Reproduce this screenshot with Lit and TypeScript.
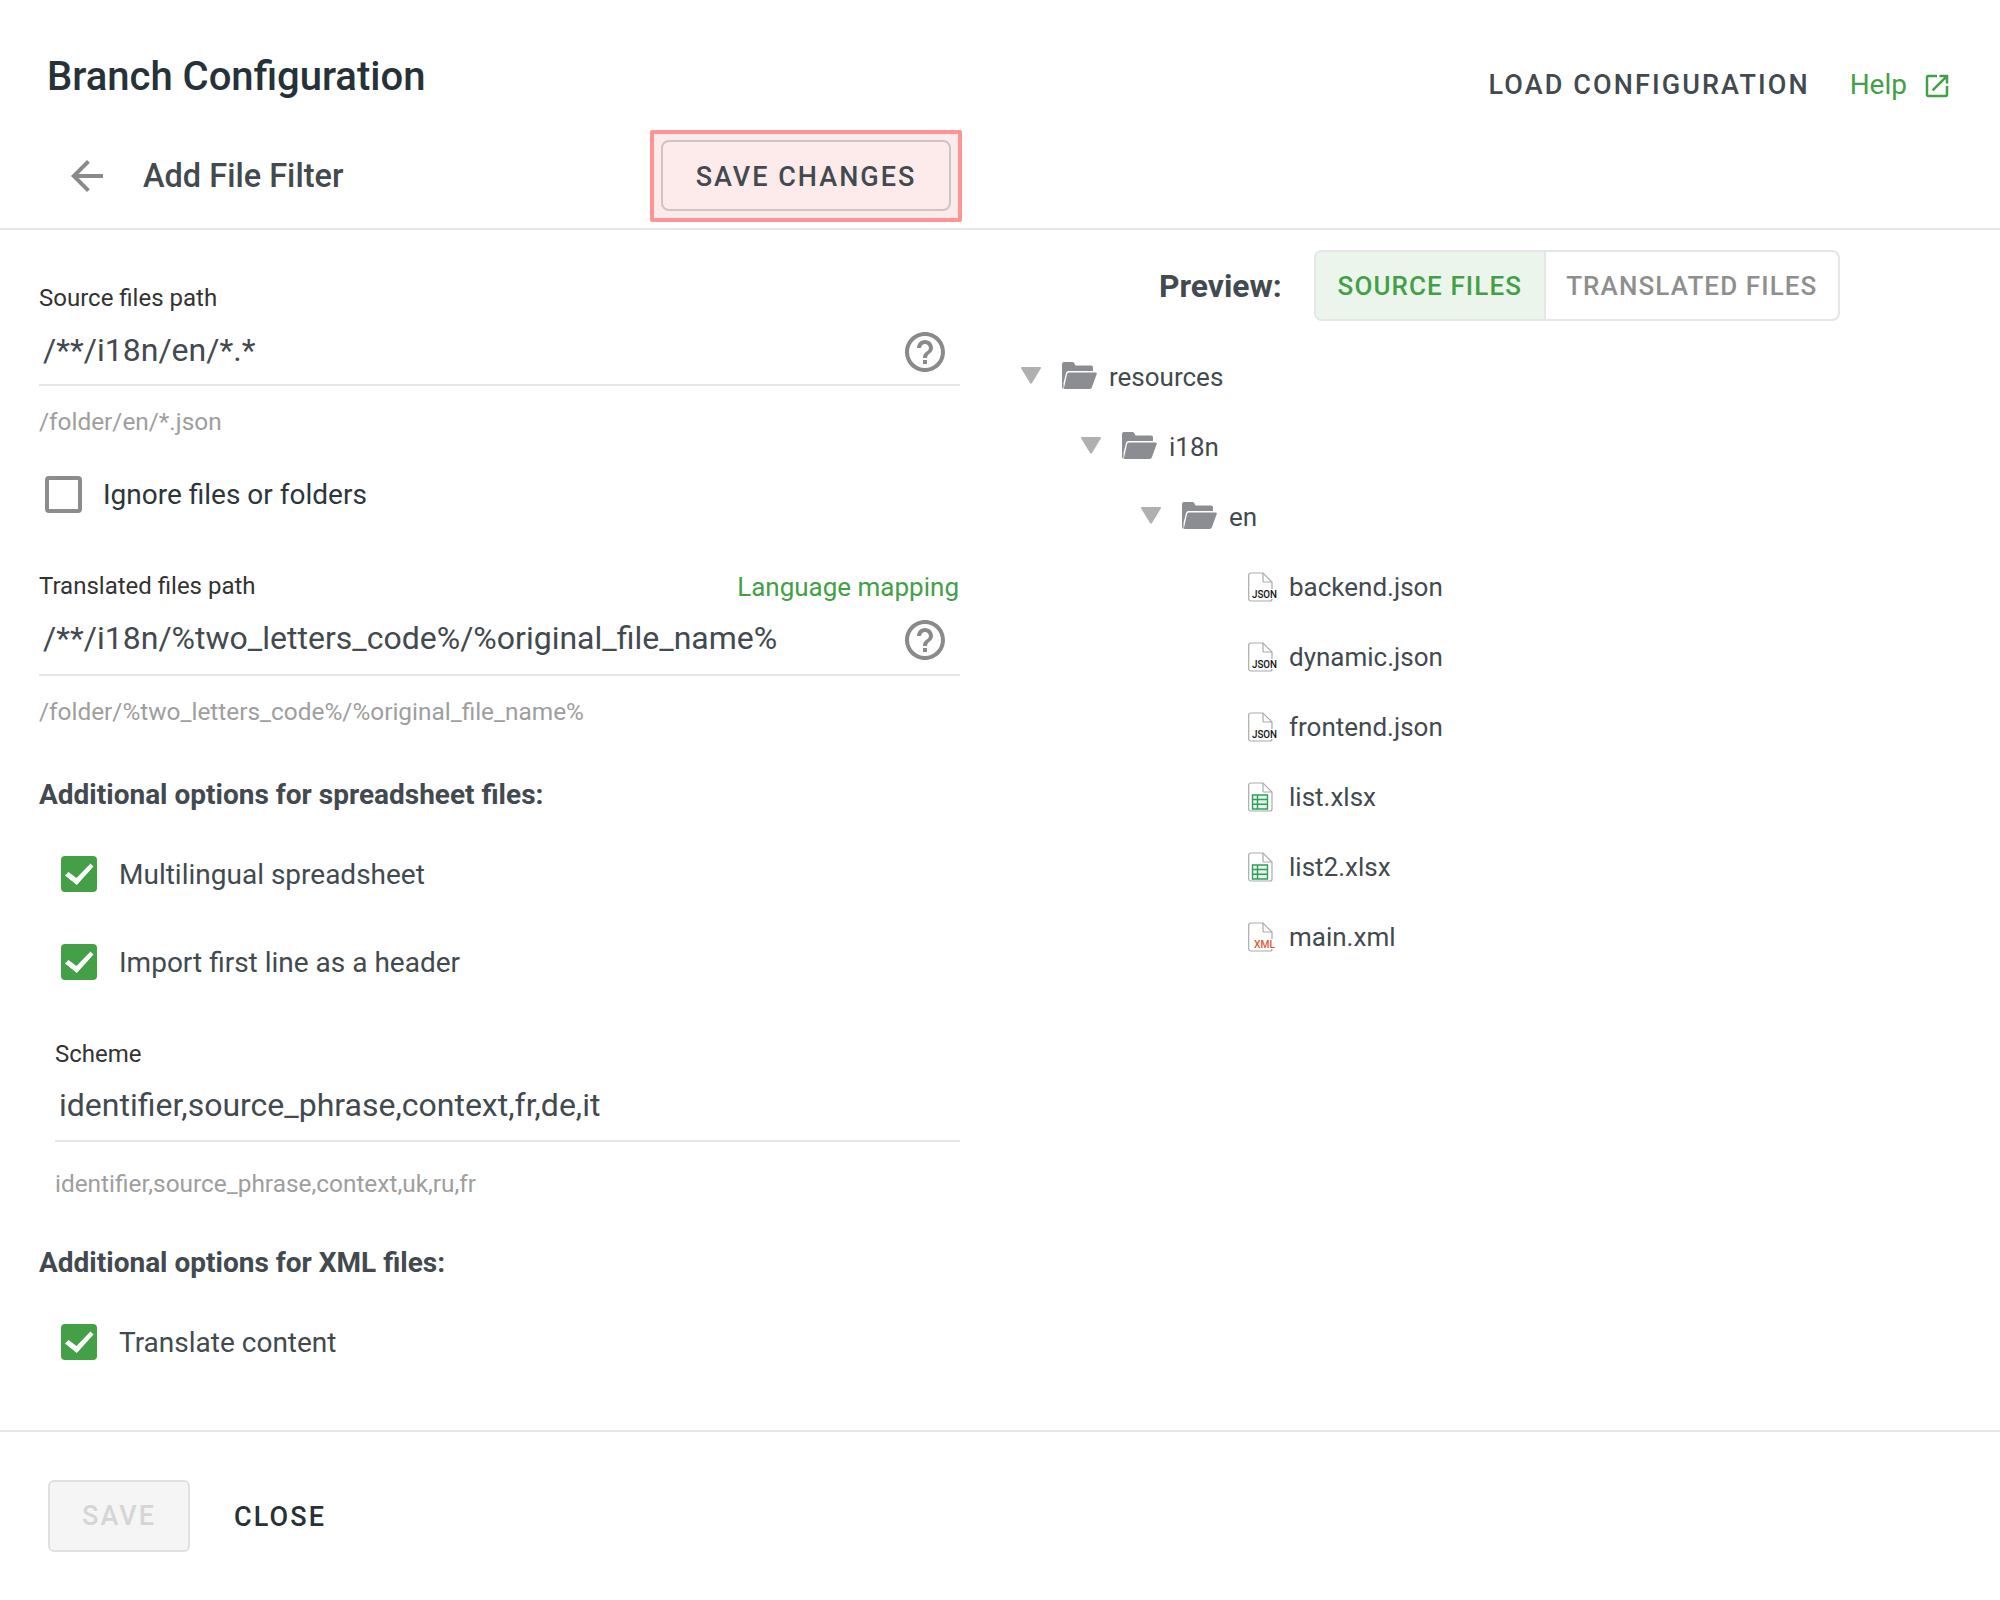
import { LitElement, html, css, svg } from "lit";
import { customElement } from "lit/decorators.js";

const HELP = "M11 18h2v-2h-2v2zm1-16C6.48 2 2 6.48 2 12s4.48 10 10 10 10-4.48 10-10S17.52 2 12 2zm0 18c-4.41 0-8-3.59-8-8s3.59-8 8-8 8 3.59 8 8-3.59 8-8 8zm0-14c-2.21 0-4 1.79-4 4h2c0-1.1.9-2 2-2s2 .9 2 2c0 2-3 1.75-3 5h2c0-2.25 3-2.5 3-5 0-2.21-1.79-4-4-4z";

const helpIcon = html`<svg class="help-icon" viewBox="0 0 24 24"><path d=${HELP}></path></svg>`;

const check = (on: boolean) => on
  ? html`<svg class="cb" viewBox="0 0 36 36"><rect width="36" height="36" rx="4" fill="#43a047"></rect><path d="M4 19.500l3.500-3.500 8 6L29.500 7.500l3 3L15.800 29z" fill="#fff"></path></svg>`
  : html`<span class="cb-off"></span>`;

const folder = html`<svg class="folder" viewBox="0 0 35 27"><path d="M0 2a2 2 0 0 1 2-2h8.500a2 2 0 0 1 1.700 1l1.300 2.500H29a2 2 0 0 1 2 2V9H6.500a2.500 2.500 0 0 0-2.400 1.800L1.500 21V26.800A2 2 0 0 1 0 25z" fill="#8b8d92"></path><path d="M7 10.500H33.500a1.200 1.200 0 0 1 1.200 1.500L30 25a2.500 2.500 0 0 1-2.400 2H3a1 1 0 0 1-1-1.200L5 12.300a2 2 0 0 1 2-1.800z" fill="#8b8d92"></path></svg>`;

const page = (inner: unknown) => html`<svg class="file" viewBox="0 0 30 30">
  <path d="M.7 3a2 2 0 0 1 2-2H15l9 9v17a2 2 0 0 1-2 2H2.700a2 2 0 0 1-2-2z" fill="#fff" stroke="#aaa" stroke-width="1.200"></path>
  <path d="M15 1v8a1 1 0 0 0 1 1H24" fill="none" stroke="#aaa" stroke-width="1.200"></path>${inner}</svg>`;

const jsonIcon = page(svg`<rect x="3" y="17" width="27" height="10" fill="#fff"></rect><text x="4" y="26" font-family="Roboto" font-weight="500" font-size="10.500" textLength="25" lengthAdjust="spacingAndGlyphs" fill="#111">JSON</text>`);
const xlsxIcon = page(svg`<path d="M4.500 13h15v14h-15zM4.500 17.500h15M4.500 22.300h15M9.500 13v14" fill="#e6f4ea" stroke="#2e9e5b" stroke-width="1.400"></path>`);
const xmlIcon = page(svg`<rect x="5" y="17" width="25" height="10" fill="#fff"></rect><text x="6" y="26" font-family="Roboto" font-weight="500" font-size="10" textLength="21" lengthAdjust="spacingAndGlyphs" fill="#e4572e">XML</text>`);

const FOLDERS = ["resources", "i18n", "en"];
const FILES: [string, unknown][] = [
  ["backend.json", jsonIcon],
  ["dynamic.json", jsonIcon],
  ["frontend.json", jsonIcon],
  ["list.xlsx", xlsxIcon],
  ["list2.xlsx", xlsxIcon],
  ["main.xml", xmlIcon],
];

@customElement("app-root")
export class AppRoot extends LitElement {
  static styles = css`
    :host { display: block; width: 2000px; height: 1600px; background: #fff; font-family: Roboto, "Liberation Sans", sans-serif; color: #424a4f; position: relative; overflow: hidden; }
    * { box-sizing: border-box; }
    .top { height: 230px; border-bottom: 2px solid #e6e6e6; }
    .title-row { height: 130px; display: flex; justify-content: space-between; padding: 55px 48px 0 47px; }
    h1 { margin: 0; font-size: 40px; line-height: 44px; font-weight: 500; color: #263238; }
    .top-actions { display: flex; align-items: center; height: 60px; }
    .load { font-size: 27px; font-weight: 500; letter-spacing: 2.100px; color: #424a4f; margin-right: 40px; }
    .help-link { font-size: 28px; color: #43a047; margin: -1px 15px 0 0; }
    .ext { width: 30px; height: 30px; fill: #43a047; margin-top: 2px; }
    .sub-row { height: 98px; display: flex; padding-left: 63px; margin-top: -1px; position: relative; }
    .back { width: 48px; height: 48px; fill: #8a8a8a; margin-top: 23px; }
    h2 { margin: 25px 0 0 32px; font-size: 32.500px; line-height: 44px; font-weight: 500; color: #424a4f; width: 507px; }
    .highlight { width: 312px; height: 92px; margin-top: 1px; border: 4px solid #ff9494; background: #fdeaea; border-radius: 2px; padding: 6px 7px; }
    .highlight button { width: 100%; height: 71px; border: 2px solid #cfc4c5; border-radius: 8px; background: transparent; font: 500 27px Roboto, sans-serif; letter-spacing: 2px; color: #424a4f; padding: 2px 0 0; }
    .body { display: flex; height: 1200px; }
    .left { width: 960px; padding: 50px 0 0 39px; flex: none; }
    .label { font-size: 24px; line-height: 36px; color: #333; }
    .input { height: 70px; border-bottom: 2px solid #e6e6e6; display: flex; align-items: center; justify-content: space-between; padding: 0 11px 0 4px; font-size: 32px; color: #424a4f; }
    .input.tall { height: 72px; padding-bottom: 2px; }
    .help-icon { width: 48px; height: 48px; fill: #8a8a8a; flex: none; margin-top: 4px; }
    .hint { font-size: 24.400px; line-height: 30px; margin-top: 21px; color: #9e9e9e; }
    .ignore { display: flex; align-items: center; height: 40px; margin: 37px 0 0 6px; font-size: 28px; color: #2c363b; }
    .cb-off { width: 37px; height: 37px; border: 4px solid #8c8c8c; border-radius: 4px; margin-right: 21px; flex: none; }
    .label-row { display: flex; justify-content: space-between; align-items: center; margin-top: 54px; }
    .lang { font-size: 26px; color: #43a047; margin: 2px 1px 0 0; }
    .section { font-size: 28px; font-weight: 700; line-height: 36px; color: #424a4f; margin-top: 50px; }
    .section.xml { margin-top: 46px; }
    .opt { display: flex; align-items: center; height: 36px; margin: 43px 0 0 22px; font-size: 28px; }
    .opt + .opt { margin-top: 52px; }
    .section.xml + .opt { margin-top: 43px; }
    .cb { width: 36px; height: 36px; margin-right: 22px; flex: none; }
    .scheme { margin: 56px 0 0 16px; }
    .scheme .input { padding-bottom: 2px; }
    .scheme .hint { margin-top: 27px; }
    .right { flex: 1; padding: 20px 0 0 61px; }
    .preview { display: flex; align-items: center; height: 71px; padding-left: 138px; }
    .preview b { font-size: 31.800px; font-weight: 700; margin-right: 32px; color: #424a4f; }
    .seg { display: flex; width: 526px; height: 71px; border: 2px solid #e6e6e6; border-radius: 8px; overflow: hidden; font-size: 26px; font-weight: 500; letter-spacing: 1.100px; }
    .seg div { display: flex; align-items: center; justify-content: center; }
    .seg .on { width: 230px; background: #ebf5ec; color: #43a047; border-right: 2px solid #e6e6e6; }
    .seg .off { flex: 1; color: #8f8f8f; }
    .tree { margin-top: 21px; }
    .row { height: 70px; display: flex; align-items: center; font-size: 26px; color: #424a4f; }
    .tri { width: 20px; height: 17px; margin: -4px 21px 0 0; flex: none; fill: #b0b0b0; }
    .folder { width: 35px; height: 27px; margin: -4px 12px 0 0; flex: none; }
    .file { width: 30px; height: 30px; margin: 0 11px 0 0; flex: none; }
    .foot { border-top: 2px solid #e6e6e6; height: 170px; padding: 48px 0 0 48px; display: flex; }
    .save { width: 142px; height: 72px; border: 2px solid #e0e0e0; border-radius: 6px; background: #f5f5f5; color: #d5d5d5; font: 500 27px Roboto, sans-serif; letter-spacing: 2px; padding: 0; }
    .close { height: 72px; display: flex; align-items: center; margin-left: 44px; padding-top: 1px; font-size: 27px; font-weight: 500; letter-spacing: 2.100px; color: #263238; }
  `;

  render() {
    return html`
      <div class="top">
        <div class="title-row">
          <h1>Branch Configuration</h1>
          <div class="top-actions">
            <span class="load">LOAD CONFIGURATION</span>
            <span class="help-link">Help</span>
            <svg class="ext" viewBox="0 0 24 24"><path d="M19 19H5V5h7V3H5c-1.110 0-2 .9-2 2v14c0 1.100.89 2 2 2h14c1.100 0 2-.9 2-2v-7h-2v7zM14 3v2h3.590l-9.830 9.830 1.410 1.410L19 6.410V10h2V3h-7z"></path></svg>
          </div>
        </div>
        <div class="sub-row">
          <svg class="back" viewBox="0 0 24 24"><path d="M20 11H7.830l5.590-5.590L12 4l-8 8 8 8 1.410-1.410L7.830 13H20v-2z"></path></svg>
          <h2>Add File Filter</h2>
          <div class="highlight"><button>SAVE CHANGES</button></div>
        </div>
      </div>
      <div class="body">
        <div class="left">
          <div class="label">Source files path</div>
          <div class="input"><span>/**/i18n/en/*.*</span>${helpIcon}</div>
          <div class="hint">/folder/en/*.json</div>
          <div class="ignore">${check(false)}<span>Ignore files or folders</span></div>
          <div class="label-row"><span class="label">Translated files path</span><span class="lang">Language mapping</span></div>
          <div class="input tall"><span>/**/i18n/%two_letters_code%/%original_file_name%</span>${helpIcon}</div>
          <div class="hint">/folder/%two_letters_code%/%original_file_name%</div>
          <div class="section">Additional options for spreadsheet files:</div>
          <div class="opt">${check(true)}<span>Multilingual spreadsheet</span></div>
          <div class="opt">${check(true)}<span>Import first line as a header</span></div>
          <div class="scheme">
            <div class="label">Scheme</div>
            <div class="input"><span>identifier,source_phrase,context,fr,de,it</span></div>
            <div class="hint">identifier,source_phrase,context,uk,ru,fr</div>
          </div>
          <div class="section xml">Additional options for XML files:</div>
          <div class="opt">${check(true)}<span>Translate content</span></div>
        </div>
        <div class="right">
          <div class="preview">
            <b>Preview:</b>
            <div class="seg"><div class="on">SOURCE FILES</div><div class="off">TRANSLATED FILES</div></div>
          </div>
          <div class="tree">
            ${FOLDERS.map((name, i) => html`<div class="row" style="padding-left:${i * 60}px">
              <svg class="tri" viewBox="0 0 20 17"><path d="M1 0h18a1 1 0 0 1 .8 1.500L11 16a1.200 1.200 0 0 1-2 0L.2 1.500A1 1 0 0 1 1 0z"></path></svg>
              ${folder}<span>${name}</span></div>`)}
            ${FILES.map(([name, icon]) => html`<div class="row" style="padding-left:227px">${icon}<span>${name}</span></div>`)}
          </div>
        </div>
      </div>
      <div class="foot">
        <button class="save">SAVE</button>
        <div class="close">CLOSE</div>
      </div>
    `;
  }
}
